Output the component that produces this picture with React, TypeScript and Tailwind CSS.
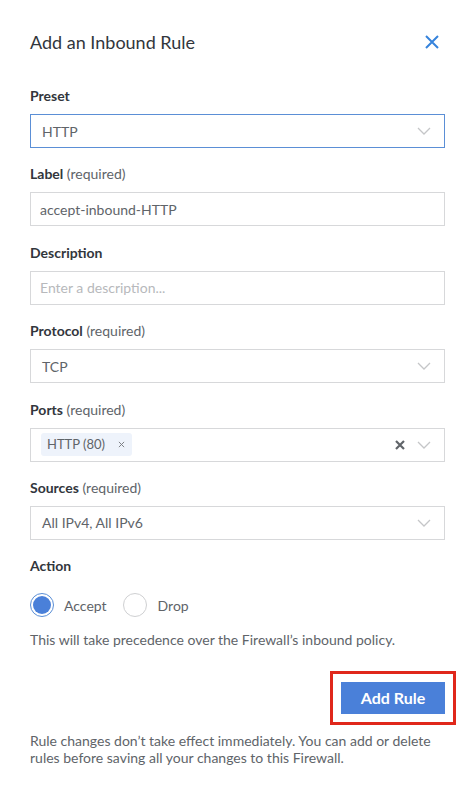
import React from "react";

const Chevron = () => (
  <svg width="14" height="8" viewBox="0 0 14 8" fill="none" className="shrink-0">
    <path d="M1 1l6 6 6-6" stroke="#c5c6c8" strokeWidth="1.3" />
  </svg>
);

function Label({ name, req }: { name: string; req?: boolean }) {
  return (
    <div className="text-[14px] leading-[18px] text-[#32363c] mb-[9px]">
      <span className="font-bold">{name}</span>
      {req && <span className="text-[#606469]"> (required)</span>}
    </div>
  );
}

function SelectBox({ value, focused }: { value: string; focused?: boolean }) {
  return (
    <div
      className={`h-[34px] flex items-center justify-between pl-[11px] pr-[13px] border ${
        focused ? "border-[#5b8fd6]" : "border-[#d7d8da]"
      } bg-white`}
    >
      <span className="text-[14px] text-[#606469]">{value}</span>
      <Chevron />
    </div>
  );
}

export default function App() {
  return (
    <div
      className="w-[475px] min-h-[798px] bg-white px-[30px] pt-[31px]"
      style={{ fontFamily: "Lato, 'Noto Sans', sans-serif" }}
    >
      <div className="flex items-center justify-between h-[22px]">
        <h1 className="text-[18px] text-[#32363c] leading-[22px]">Add an Inbound Rule</h1>
        <svg width="14" height="14" viewBox="0 0 14 14" className="mr-[6px]">
          <path d="M1 1l12 12M13 1L1 13" stroke="#3683dc" strokeWidth="2" />
        </svg>
      </div>

      <div className="mt-[34px] flex flex-col gap-[17.4px]">
        <div>
          <Label name="Preset" />
          <SelectBox value="HTTP" focused />
        </div>
        <div>
          <Label name="Label" req />
          <div className="h-[34px] flex items-center px-[9px] border border-[#d7d8da]">
            <span className="text-[14px] text-[#606469]">accept-inbound-HTTP</span>
          </div>
        </div>
        <div>
          <Label name="Description" />
          <div className="h-[34px] flex items-center px-[9px] border border-[#d7d8da]">
            <span className="text-[14px] text-[#b7b9bc]">Enter a description...</span>
          </div>
        </div>
        <div>
          <Label name="Protocol" req />
          <SelectBox value="TCP" />
        </div>
        <div>
          <Label name="Ports" req />
          <div className="h-[34px] flex items-center justify-between pl-[10px] pr-[13px] border border-[#d7d8da]">
            <div className="h-[23px] w-[91px] flex items-center bg-[#eef3fb] rounded-[3px] pl-[6px] gap-[13px]">
              <span className="text-[13px] text-[#606469]">HTTP (80)</span>
              <svg width="7" height="7" viewBox="0 0 8 8">
                <path d="M1 1l6 6M7 1L1 7" stroke="#7a7d82" strokeWidth="1.1" />
              </svg>
            </div>
            <div className="flex items-center gap-[12px]">
              <svg width="10" height="10" viewBox="0 0 10 10">
                <path d="M1 1l8 8M9 1L1 9" stroke="#606469" strokeWidth="2.2" />
              </svg>
              <Chevron />
            </div>
          </div>
        </div>
        <div>
          <Label name="Sources" req />
          <SelectBox value="All IPv4, All IPv6" />
        </div>
        <div>
          <div className="text-[14px] leading-[18px] text-[#32363c] font-bold">Action</div>
          <div className="mt-[18px] h-[24px] flex items-center">
            <div className="w-[24px] h-[24px] rounded-full border border-[#5b8fd6] flex items-center justify-center">
              <div className="w-[18px] h-[18px] rounded-full bg-[#4a80d9]" />
            </div>
            <span className="ml-[10px] text-[14px] text-[#606469]">Accept</span>
            <div className="ml-[16px] w-[24px] h-[24px] rounded-full border border-[#cfd0d2]" />
            <span className="ml-[11px] text-[14px] text-[#606469]">Drop</span>
          </div>
          <p className="mt-[14px] text-[14px] leading-[18px] text-[#606469]">
            This will take precedence over the Firewall’s inbound policy.
          </p>
        </div>
      </div>

      <div className="mt-[33px] flex justify-end">
        <button className="w-[104px] h-[32px] bg-[#4a80d9] text-white text-[16px] font-bold outline-[3px] outline-solid outline-[#e0281b] outline-offset-[8px]">
          Add Rule
        </button>
      </div>

      <p className="mt-[18px] text-[14px] leading-[17px] text-[#606469]">
        Rule changes don’t take effect immediately. You can add or delete rules before saving all your changes to this Firewall.
      </p>
    </div>
  );
}
